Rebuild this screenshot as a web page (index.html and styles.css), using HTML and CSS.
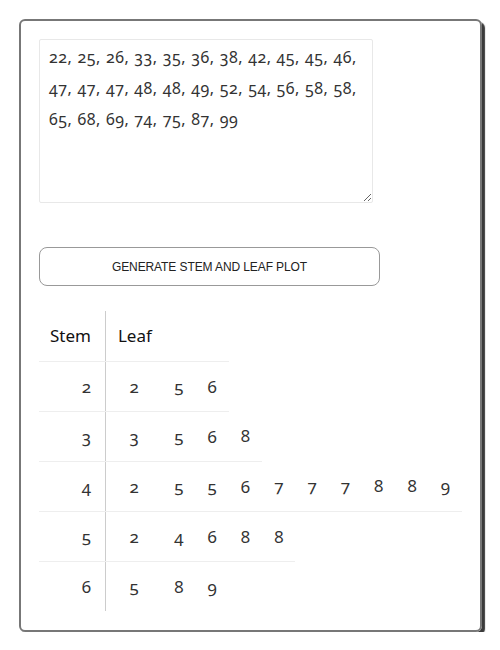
FILE: index.html
```html
<!DOCTYPE html>
<html lang="en">
<head>
    <meta charset="UTF-8">
    <meta name="viewport" content="width=device-width, initial-scale=1.0">
    <title>Stem and Leaf Plot</title>
    <link rel="stylesheet" href="styles.css">
</head>
<body>
    <div class="card">
        <!-- data input -->
        <textarea id="dataInput" class="data-input">22, 25, 26, 33, 35, 36, 38, 42, 45, 45, 46, 47, 47, 47, 48, 48, 49, 52, 54, 56, 58, 58, 65, 68, 69, 74, 75, 87, 99</textarea>

        <button id="generateBtn" class="generate-btn" type="button">Generate stem and leaf plot</button>

        <!-- plot -->
        <table id="plot" class="plot">
            <thead>
                <tr>
                    <th class="stem">Stem</th>
                    <th class="leaf-head" colspan="3">Leaf</th>
                </tr>
            </thead>
            <tbody>
                <tr><td class="stem">2</td><td class="first">2</td><td>5</td><td>6</td></tr>
                <tr><td class="stem">3</td><td class="first">3</td><td>5</td><td>6</td><td>8</td></tr>
                <tr><td class="stem">4</td><td class="first">2</td><td>5</td><td>5</td><td>6</td><td>7</td><td>7</td><td>7</td><td>8</td><td>8</td><td>9</td></tr>
                <tr><td class="stem">5</td><td class="first">2</td><td>4</td><td>6</td><td>8</td><td>8</td></tr>
                <tr><td class="stem">6</td><td class="first">5</td><td>8</td><td>9</td></tr>
            </tbody>
        </table>
    </div>
</body>
</html>
```

FILE: styles.css
```css
body {
    margin: 0;
    padding: 19px 0 0 19px;
    background-color: #fff;
    font-family: "Noto Sans", "Open Sans", sans-serif;
    color: #222;
}

.card {
    width: 423px;
    padding: 18px 18px 19px 18px;
    border: 2px solid #777;
    border-radius: 6px;
    box-shadow: 3px 3px 1px #3a3a3a;
    display: flex;
    flex-direction: column;
    align-items: flex-start;
}

.data-input {
    width: 334px;
    height: 164px;
    box-sizing: border-box;
    padding: 2px 9px;
    border: 1px solid #e8e8e8;
    border-radius: 2px;
    font-family: "Noto Sans", "Open Sans", sans-serif;
    font-size: 16px;
    letter-spacing: 0.5px;
    word-spacing: 0.5px;
    line-height: 31px;
    font-variant-numeric: oldstyle-nums;
    color: #333;
    resize: vertical;
    outline: none;
}

.generate-btn {
    margin-top: 44px;
    width: 341px;
    height: 39px;
    background-color: #fff;
    border: 1px solid #999;
    border-radius: 8px;
    font-family: "Liberation Sans", Arial, sans-serif;
    font-size: 12px;
    letter-spacing: -0.1px;
    text-transform: uppercase;
    color: #222;
}

.plot {
    margin-top: 25px;
    border-collapse: collapse;
    font-size: 17px;
    font-variant-numeric: oldstyle-nums;
    color: #333;
}

.plot th, .plot td {
    height: 50px;
    padding: 0 12px;
    box-sizing: border-box;
    text-align: center;
    font-weight: normal;
    border-bottom: 1px solid #eee;
}

.plot th {
    color: #111;
}

.plot tbody tr:last-child td {
    border-bottom: none;
}

.plot .stem {
    text-align: right;
    padding: 0 14px 0 11px;
    border-right: 1px solid #ccc;
}

.plot .leaf-head {
    text-align: left;
}

.plot .first {
    width: 60px;
}
```
